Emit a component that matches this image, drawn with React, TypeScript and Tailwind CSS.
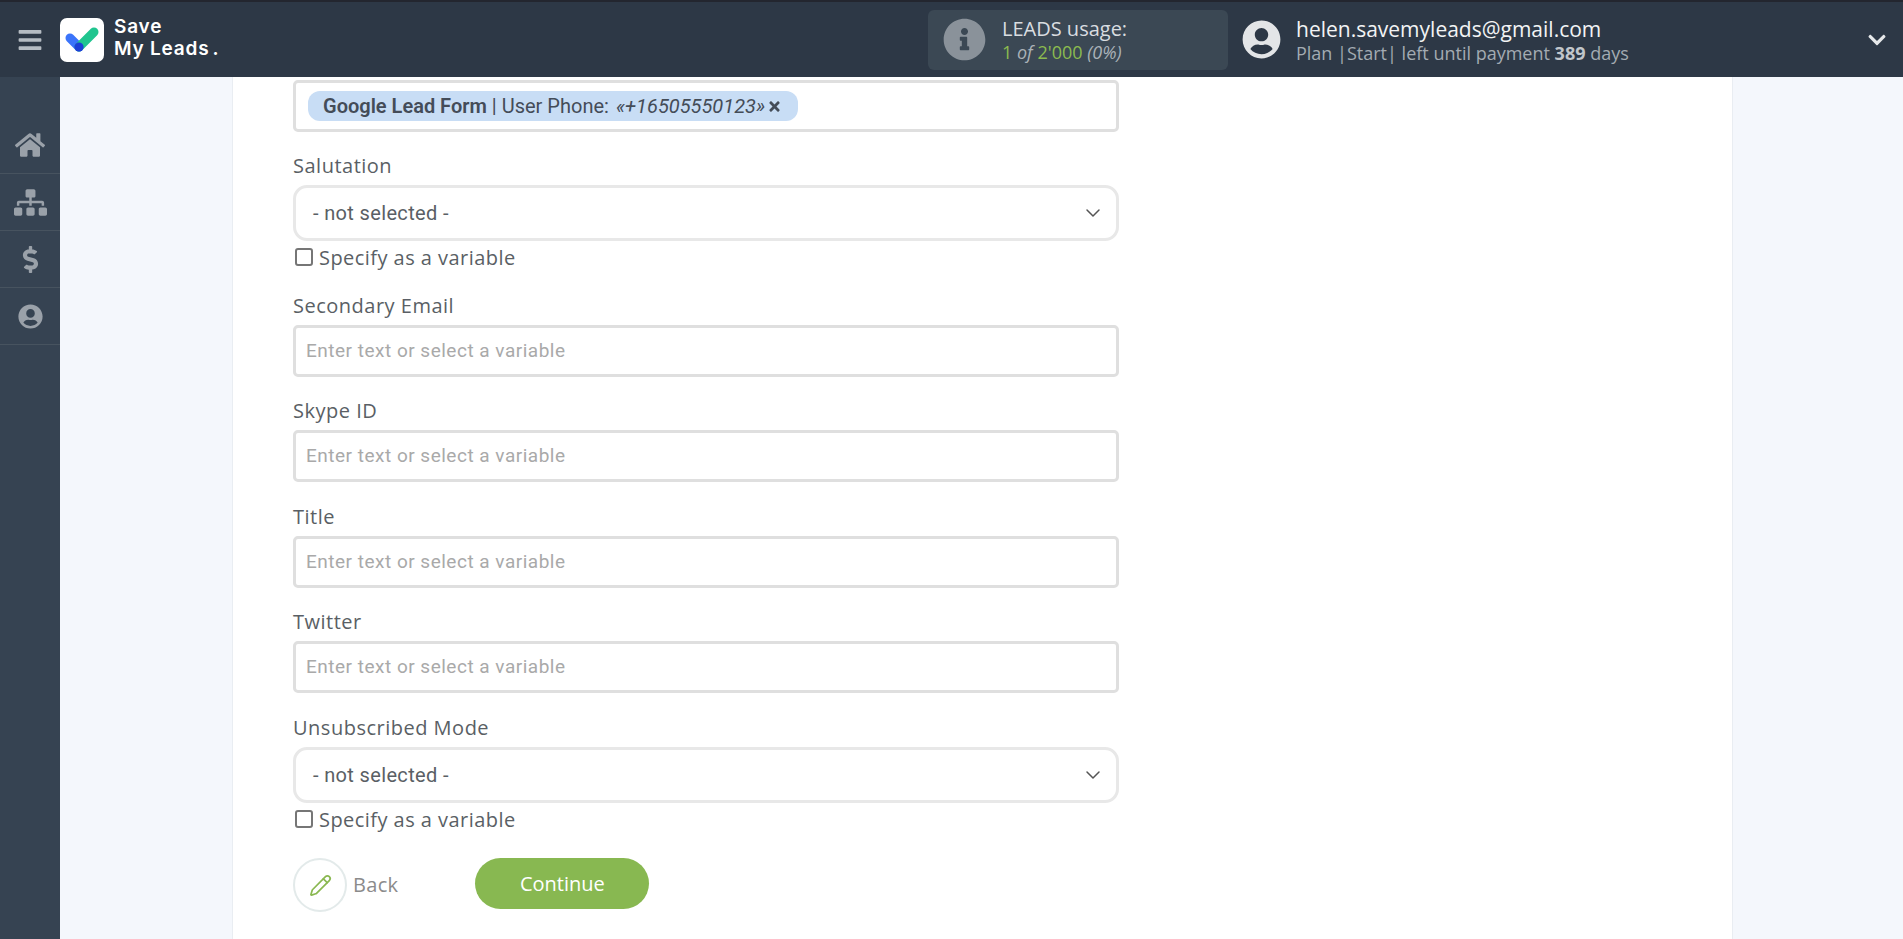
import React from "react";
import { ChevronDown, Pencil } from "lucide-react";
import { FaHome, FaSitemap, FaDollarSign, FaUserCircle, FaInfoCircle, FaBars, FaTimes, FaChevronDown } from "react-icons/fa";

const OS = { fontFamily: '"Open Sans", sans-serif' };

function Label({ children }: { children: React.ReactNode }) {
  return <div className="h-[20px] text-[20px] leading-[20px] text-[#5a5f65] tracking-[0.5px]">{children}</div>;
}

function TextField({ label, className }: { label: string; className: string }) {
  return (
    <div className={className}>
      <Label>{label}</Label>
      <div className="mt-[9px] h-[52px] border-[3px] border-[#dfdfdf] rounded-[5px] bg-white flex items-center pl-[10px] text-[19px] text-[#a9a9a9] font-['Roboto',sans-serif] tracking-[0.5px]">
        Enter text or select a variable
      </div>
    </div>
  );
}

function SelectField({ label, className }: { label: string; className: string }) {
  return (
    <div className={className}>
      <Label>{label}</Label>
      <div className="mt-[9px] h-[56px] border-[3px] border-[#e8e8e8] rounded-[14px] bg-white flex items-center justify-between pl-[17px] pr-[11px] text-[20px] text-[#5a5f65] font-['Roboto',sans-serif] tracking-[0.35px]">
        <span>- not selected -</span>
        <ChevronDown size={24} strokeWidth={1.5} className="text-[#555]" />
      </div>
      <label className="mt-[3px] flex items-center h-[28px] text-[20px] text-[#5a5f65] tracking-[0.45px]">
        <span className="w-[18px] h-[18px] ml-[2px] mr-[6px] -mt-[2px] rounded-[3px] border-2 border-[#767676] bg-white" />
        Specify as a variable
      </label>
    </div>
  );
}

export default function App() {
  return (
    <div className="h-[939px] w-[1903px] overflow-hidden flex flex-col bg-[#f4f7fc]" style={OS}>
      <header className="h-[77px] shrink-0 bg-[#2d3846] border-t-2 border-[#23262f] flex items-center text-white">
        <div className="w-[60px] flex justify-center shrink-0">
          <FaBars size={26} className="text-[#b4bbc2]" />
        </div>
        <div className="w-[44px] h-[44px] bg-white rounded-[7px] flex items-center justify-center shrink-0">
          <svg width="34" height="28" viewBox="0 0 34 28">
            <path d="M5 12l9 9" stroke="#3b74fa" strokeWidth="9" strokeLinecap="round" />
            <path d="M14 21L29 6" stroke="#20c58f" strokeWidth="9" strokeLinecap="round" />
            <circle cx="14" cy="21" r="4.6" fill="#1d3fd6" />
          </svg>
        </div>
        <div className="ml-[10px] -mt-[3px] font-['Inter',sans-serif] font-semibold text-[19px] leading-[22px] tracking-[0.8px]">
          <div>Save</div>
          <div>My Leads<span className="ml-[3px]">.</span></div>
        </div>
        <div className="ml-auto w-[300px] h-[60px] rounded-[6px] bg-[#3b4854] flex items-center pl-[15px] shrink-0">
          <FaInfoCircle size={43} className="text-[#8a929a]" />
          <div className="ml-[16px]">
            <div className="text-[20px] leading-[24px] text-[#d9dde0]">LEADS usage:</div>
            <div className="text-[18px] leading-[22px] text-[#8bbb4f]">
              1 <i className="text-[#aab2b8]">of</i> 2'000 <i className="text-[#aab2b8]">(0%)</i>
            </div>
          </div>
        </div>
        <FaUserCircle size={39} className="ml-[14px] text-[#e3e5e7] shrink-0" />
        <div className="ml-[15px] w-[571px]">
          <div className="text-[21px] leading-[26px] text-[#f2f3f4]">helen.savemyleads@gmail.com</div>
          <div className="text-[18px] leading-[22px] text-[#a3abb2]">
            Plan |Start| left until payment <b className="text-[#c1c6cb]">389</b> days
          </div>
        </div>
        <FaChevronDown size={20} className="mr-[16px] text-[#e6e8ea] shrink-0" />
      </header>
      <div className="flex flex-1 min-h-0">
        <aside className="w-[60px] shrink-0 bg-[#364352] pt-[40px] text-[#9aa1a9]">
          <nav className="flex flex-col">
            <div className="h-[57px] flex items-center justify-center border-b border-[#47535f]"><FaHome size={30} /></div>
            <div className="h-[57px] flex items-center justify-center border-b border-[#47535f]"><FaSitemap size={33} /></div>
            <div className="h-[57px] flex items-center justify-center border-b border-[#47535f]"><FaDollarSign size={27} /></div>
            <div className="h-[57px] flex items-center justify-center border-b border-[#47535f]"><FaUserCircle size={25} /></div>
          </nav>
        </aside>
        <main className="ml-[172px] bg-white border-x border-[#e9edf2] w-[1501px] pl-[60px] pt-[3px]">
          <div className="w-[826px]">
            <div className="h-[52px] border-[3px] border-[#dfdfdf] rounded-[5px] flex items-center pl-[12px]">
              <span className="h-[30px] rounded-[12px] bg-[#c8ddf5] flex items-center pl-[15px] pr-[16px] text-[20px] text-[#444c58] font-['Roboto',sans-serif] whitespace-nowrap">
                <b className="font-semibold">Google Lead Form</b>
                <span className="mx-[5px]">|</span>
                User Phone:
                <i className="ml-[7px]">«+16505550123»</i>
                <FaTimes size={15} className="ml-[2px]" />
              </span>
            </div>
            <SelectField label="Salutation" className="mt-[24px]" />
            <TextField label="Secondary Email" className="mt-[24px]" />
            <TextField label="Skype ID" className="mt-[24px]" />
            <TextField label="Title" className="mt-[25px]" />
            <TextField label="Twitter" className="mt-[24px]" />
            <SelectField label="Unsubscribed Mode" className="mt-[25px]" />
            <div className="mt-[24px] flex items-start">
              <div className="w-[54px] h-[54px] rounded-full border-2 border-[#e3eaea] flex items-center justify-center">
                <Pencil size={23} strokeWidth={1.8} className="text-[#8ab851]" />
              </div>
              <span className="ml-[6px] h-[54px] flex items-center text-[20px] text-[#8b8b8b] tracking-[0.3px]">Back</span>
              <button className="ml-[77px] w-[174px] h-[51px] rounded-full bg-[#88b851] text-white text-[20px] flex items-center justify-center">Continue</button>
            </div>
          </div>
        </main>
      </div>
    </div>
  );
}
